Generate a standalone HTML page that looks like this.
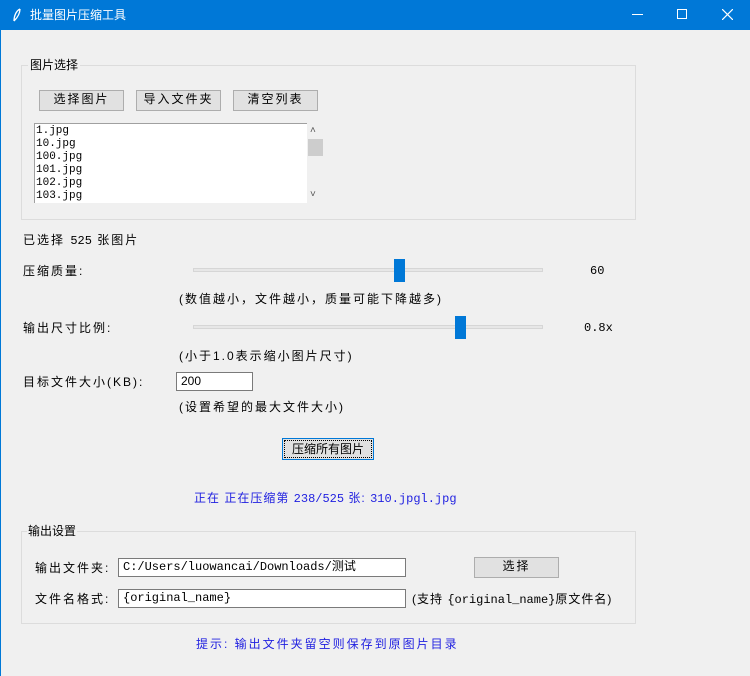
<!DOCTYPE html>
<html><head><meta charset="utf-8"><style>
*{margin:0;padding:0;box-sizing:border-box}
body{width:750px;height:676px;background:#f0f0f0;position:relative;overflow:hidden;font-family:"Liberation Sans","Noto Sans CJK SC",sans-serif;font-size:12px;color:#000}
.a{position:absolute;white-space:nowrap;line-height:14px;letter-spacing:2px}
.bar{position:absolute;left:0;top:0;width:750px;height:30px;background:#0078d7;color:#fff}
.btn{position:absolute;background:#e1e1e1;border:1px solid #adadad;text-align:center;line-height:17px;font-size:12px;letter-spacing:2px}
.frame{position:absolute;border:1px solid #dcdcdc}
.inp{position:absolute;background:#fff;border:1px solid #7a7a7a;padding-left:4px;line-height:16px;font-size:12px}
.trough{position:absolute;height:4px;background:#e7e7e7;border:1px solid #d6d6d6}
.thumb{position:absolute;width:11px;height:23px;background:#0078d7}
.mono{font-family:"Liberation Mono","Noto Sans CJK SC",monospace;letter-spacing:0}
.blue{color:#1f1fe0}
</style></head><body>
<div style="position:absolute;left:0;top:0;width:1px;height:676px;background:#0078d7"></div>
<div class="bar">
<svg style="position:absolute;left:12px;top:8px" width="10" height="14"><path d="M8 1 C4 3 2 8 2 13 M8 1 C8 5 6 9 2 13" stroke="#fff" fill="none" stroke-width="1.3"/></svg>
<div class="a" style="left:30px;top:8px;font-size:12px;color:#fff;letter-spacing:0">批量图片压缩工具</div>
<div style="position:absolute;left:632px;top:14px;width:11px;height:1px;background:#fff"></div>
<div style="position:absolute;left:677px;top:9px;width:10px;height:10px;border:1px solid #fff"></div>
<svg style="position:absolute;left:722px;top:9px" width="11" height="11"><path d="M0 0L11 11M11 0L0 11" stroke="#fff" stroke-width="1.2"/></svg>
</div>

<div class="frame" style="left:21px;top:65px;width:615px;height:155px"></div>
<div class="a" style="left:28px;top:58px;background:#f0f0f0;padding:0 2px;letter-spacing:0">图片选择</div>
<div class="btn" style="left:39px;top:90px;width:85px;height:21px">选择图片</div>
<div class="btn" style="left:136px;top:90px;width:85px;height:21px">导入文件夹</div>
<div class="btn" style="left:233px;top:90px;width:85px;height:21px">清空列表</div>
<div style="position:absolute;left:34px;top:123px;width:273px;height:80px;background:#fff;border:1px solid #a0a0a0;border-right:none;border-bottom:none;overflow:hidden;padding:1px 0 0 1px" class="mono">
<div style="line-height:13px;font-size:11px">1.jpg<br>10.jpg<br>100.jpg<br>101.jpg<br>102.jpg<br>103.jpg</div></div>
<div class="a" style="left:310px;top:124px;color:#555;font-size:10px">˄</div>
<div style="position:absolute;left:308px;top:139px;width:15px;height:17px;background:#cdcdcd"></div>
<div class="a" style="left:310px;top:188px;color:#555;font-size:10px">˅</div>

<div class="a" style="left:23px;top:233px">已选择 <span class="mono">525</span> 张图片</div>
<div class="a" style="left:23px;top:264px">压缩质量:</div>
<div class="trough" style="left:193px;top:268px;width:350px"></div>
<div class="thumb" style="left:394px;top:259px"></div>
<div class="a mono" style="left:590px;top:264px">60</div>
<div class="a" style="left:179px;top:292px">(数值越小，文件越小，质量可能下降越多)</div>
<div class="a" style="left:23px;top:321px">输出尺寸比例:</div>
<div class="trough" style="left:193px;top:325px;width:350px"></div>
<div class="thumb" style="left:455px;top:316px"></div>
<div class="a mono" style="left:584px;top:321px">0.8x</div>
<div class="a" style="left:179px;top:349px">(小于1.0表示缩小图片尺寸)</div>
<div class="a" style="left:23px;top:375px">目标文件大小(KB):</div>
<div class="inp" style="left:176px;top:372px;width:77px;height:19px">200</div>
<div class="a" style="left:179px;top:400px">(设置希望的最大文件大小)</div>
<div class="btn" style="left:282px;top:438px;width:92px;height:22px;border:1px solid #0078d7;outline:1px dotted #000;outline-offset:-3px;line-height:20px;letter-spacing:0">压缩所有图片</div>

<div class="a blue" style="left:194px;top:491px;letter-spacing:1px">正在 正在压缩第 <span class="mono">238/525</span> 张: <span class="mono">310.jpgl.jpg</span></div>

<div class="frame" style="left:21px;top:531px;width:615px;height:93px"></div>
<div class="a" style="left:27px;top:524px;background:#f0f0f0;padding:0 1px;letter-spacing:0">输出设置</div>
<div class="a" style="left:35px;top:561px">输出文件夹:</div>
<div class="inp mono" style="left:118px;top:558px;width:288px;height:19px">C:/Users/luowancai/Downloads/测试</div>
<div class="btn" style="left:474px;top:557px;width:85px;height:21px">选择</div>
<div class="a" style="left:35px;top:592px">文件名格式:</div>
<div class="inp mono" style="left:118px;top:589px;width:288px;height:19px">{original_name}</div>
<div class="a" style="left:412px;top:592px;letter-spacing:1px">(支持 <span class="mono">{original_name}</span>原文件名)</div>

<div class="a blue" style="left:196px;top:637px">提示: 输出文件夹留空则保存到原图片目录</div>
</body></html>
